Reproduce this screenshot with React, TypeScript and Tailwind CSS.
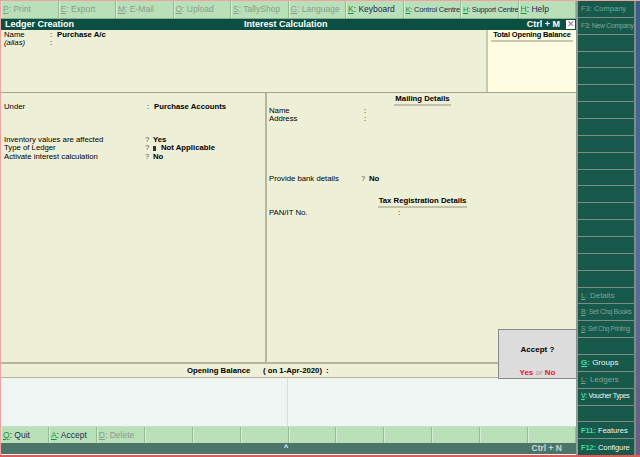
import React from 'react';

type Btn = { k: string; label: string; on?: boolean; size?: string };

const topButtons: Btn[] = [
  { k: 'P', label: 'Print' },
  { k: 'E', label: 'Export' },
  { k: 'M', label: 'E-Mail' },
  { k: 'O', label: 'Upload' },
  { k: 'S', label: 'TallyShop' },
  { k: 'G', label: 'Language' },
  { k: 'K', label: 'Keyboard', on: true },
  { k: 'K', label: 'Control Centre', on: true, size: 'text-[7.5px] tracking-[-0.2px]' },
  { k: 'H', label: 'Support Centre', on: true, size: 'text-[7.5px] tracking-[-0.3px]' },
  { k: 'H', label: 'Help', on: true },
];

const bottomButtons: (Btn | null)[] = [
  { k: 'Q', label: 'Quit', on: true },
  { k: 'A', label: 'Accept', on: true },
  { k: 'D', label: 'Delete' },
  null, null, null, null, null, null, null, null, null,
];

const side: (Btn | null)[] = [
  { k: 'F3', label: 'Company', size: 'text-[7.5px]' },
  { k: 'F3', label: 'New Company', size: 'text-[7px] tracking-[-0.35px]' },
  ...Array(15).fill(null),
  { k: 'L', label: 'Details' },
  { k: 'B', label: 'Set Chq Books', size: 'text-[7px] tracking-[-0.3px]' },
  { k: 'S', label: 'Set Chq Printing', size: 'text-[6.5px] tracking-[-0.35px]' },
  null,
  { k: 'G', label: 'Groups', on: true },
  { k: 'L', label: 'Ledgers' },
  { k: 'V', label: 'Voucher Types', on: true, size: 'text-[7px] tracking-[-0.4px]' },
  null,
  { k: 'F11', label: 'Features', on: true, size: 'text-[7.5px]' },
  { k: 'F12', label: 'Configure', on: true, size: 'text-[7.5px] tracking-[-0.1px]' },
];

function BarButton({ b }: { b: Btn | null }) {
  return (
    <div className="flex-1 flex items-center pl-[2px] border-r border-[#98b898] shadow-[inset_1px_0_0_#d6eed6] whitespace-nowrap overflow-hidden">
      {b && (
        <span className={`${b.size ?? 'text-[8.5px]'} ${b.on ? 'text-[#1d2b57]' : 'text-[#8c9c8c]'}`}>
          <span className={`underline ${b.on ? 'text-[#139346]' : ''}`}>{b.k}</span>: {b.label}
        </span>
      )}
    </div>
  );
}

function SideButton({ b }: { b: Btn | null }) {
  return (
    <div className="flex-1 bg-[#17594b] flex items-center pl-[3px] whitespace-nowrap overflow-hidden">
      {b && (
        <span className={`${b.size ?? 'text-[8px]'} ${b.on ? 'text-[#eef4f1]' : 'text-[#7fa497]'}`}>
          <span className={`${b.k.length === 1 ? 'underline' : ''} ${b.on ? 'text-[#43dba6] font-bold' : ''}`}>{b.k}</span>
          <span className={b.on ? 'text-[#43dba6] font-bold' : ''}>:</span> {b.label}
        </span>
      )}
    </div>
  );
}

export default function App() {
  return (
    <div
      className="w-[640px] h-[457px] flex flex-col bg-[#f2f2f2] overflow-hidden text-black"
      style={{ fontFamily: '"Liberation Sans", Arial, sans-serif' }}
    >
      <div className="h-[1px] bg-[#f0a3a0]" />
      <div className="flex-1 flex min-h-0">
        {/* Main column */}
        <div className="w-[576px] flex flex-col border-l border-[#f0a3a0] relative">
          {/* Top button bar */}
          <div className="h-[18px] flex bg-[#b9e0b8] border-b border-[#8fb08f]">
            {topButtons.map((b, i) => (
              <BarButton key={i} b={b} />
            ))}
          </div>

          {/* Title bar */}
          <div className="h-[11px] bg-[#0c5043] flex items-center text-white font-bold text-[9px] leading-none">
            <span className="w-[240px] pl-[4px]">Ledger Creation</span>
            <span className="flex-1 pl-[3px]">Interest Calculation</span>
            <span className="mr-[6px]">Ctrl + M</span>
            <span className="w-[9px] h-[9px] bg-white text-[#777] text-[9px] font-normal flex items-center justify-center mr-[1px]">
              ✕
            </span>
          </div>

          {/* Top section */}
          <div className="h-[63px] flex bg-[#eeefd7] border-b border-[#a3a48f] text-[7.75px] leading-[8px]">
            <div className="flex-1 pl-[3px] pt-[1px]">
              <div className="flex">
                <span className="w-[46px]">Name</span>
                <span className="w-[7px]">:</span>
                <span className="font-bold">Purchase A/c</span>
              </div>
              <div className="flex">
                <span className="w-[46px] italic">(alias)</span>
                <span>:</span>
              </div>
            </div>
            <div className="w-[90px] bg-[#fffde1] border-l-2 border-[#c9c9b2] flex flex-col items-center pt-[1px]">
              <span className="font-bold border-b-2 border-[#c7c7b0] px-[2px] pb-[1px] whitespace-nowrap text-[7.5px] tracking-[-0.15px]">
                Total Opening Balance
              </span>
            </div>
          </div>

          {/* Lower section */}
          <div className="h-[269px] flex bg-[#eeefd7] text-[7.75px] leading-[8.5px]">
            <div className="w-[266px] border-r-2 border-[#b4b4a0] pl-[3px] pt-[10px]">
              <div className="flex">
                <span className="w-[143px]">Under</span>
                <span className="w-[7px]">:</span>
                <span className="font-bold">Purchase Accounts</span>
              </div>
              <div className="h-[24px]" />
              <div className="flex">
                <span className="w-[141px]">Inventory values are affected</span>
                <span className="w-[8px] text-[#555]">?</span>
                <span className="font-bold">Yes</span>
              </div>
              <div className="flex">
                <span className="w-[141px]">Type of Ledger</span>
                <span className="w-[8px] text-[#555]">?</span>
                <span className="w-[3px] h-[5px] bg-[#333] self-center mr-[5px]" />
                <span className="font-bold">Not Applicable</span>
              </div>
              <div className="flex">
                <span className="w-[141px]">Activate interest calculation</span>
                <span className="w-[8px] text-[#555]">?</span>
                <span className="font-bold">No</span>
              </div>
            </div>

            <div className="flex-1 pt-[2px] pl-[2px]">
              <div className="flex justify-center">
                <span className="font-bold border-b-2 border-[#c2c2ab] px-[1px]">Mailing Details</span>
              </div>
              <div className="pt-[1px]">
                <div className="flex">
                  <span className="w-[95px]">Name</span>
                  <span>:</span>
                </div>
                <div className="flex">
                  <span className="w-[95px]">Address</span>
                  <span>:</span>
                </div>
              </div>
              <div className="h-[51px]" />
              <div className="flex">
                <span className="w-[92px]">Provide bank details</span>
                <span className="w-[8px] text-[#555]">?</span>
                <span className="font-bold">No</span>
              </div>
              <div className="flex justify-center pt-[14px]">
                <span className="font-bold border-b-2 border-[#c2c2ab] px-[1px]">Tax Registration Details</span>
              </div>
              <div className="flex pt-[1px]">
                <span className="w-[129px]">PAN/IT No.</span>
                <span>:</span>
              </div>
            </div>
          </div>

          {/* Opening balance row */}
          <div className="h-[15px] bg-[#eeefd7] border-t-2 border-[#b4b4a0] flex items-center text-[7.75px] font-bold">
            <span className="ml-[186px] w-[76px]">Opening Balance</span>
            <span>( on 1-Apr-2020)</span>
            <span className="ml-[4px]">:</span>
          </div>

          {/* Amount area */}
          <div className="h-[49px] bg-[#eef5f2] border-t border-[#b4b4a0] flex">
            <div className="w-[287px] border-r border-[#d9dedb]" />
            <div className="flex-1" />
          </div>

          {/* Bottom button bar */}
          <div className="h-[17px] flex bg-[#b9e0b8] border-t border-[#c9dcc9]">
            {bottomButtons.map((b, i) => (
              <BarButton key={i} b={b} />
            ))}
          </div>

          {/* Status bar */}
          <div className="h-[11px] bg-[#4d7469] flex items-center text-[#c9d6d1] text-[8.5px] font-bold">
            <span className="ml-[283px] text-white text-[7px]">^</span>
            <span className="ml-auto mr-[14px]">Ctrl + N</span>
          </div>

          {/* Accept dialog */}
          <div className="absolute left-[497px] top-[328px] w-[79px] h-[50px] bg-[#dcdcdc] border border-[#8a8a8a] flex flex-col items-center text-[8px] leading-[8px] font-bold">
            <span className="mt-[16px]">Accept ?</span>
            <span className="mt-[15px]">
              <span className="text-[#e0202a]">Yes</span>
              <span className="text-[#9a9a9a] font-normal"> or </span>
              <span className="text-[#e0202a]">No</span>
            </span>
          </div>
        </div>

        {/* Right sidebar */}
        <div className="w-[60px] bg-[#7d8d86] border-l-2 border-[#8e9c96] flex flex-col gap-px pr-[2px]">
          {side.map((b, i) => (
            <SideButton key={i} b={b} />
          ))}
        </div>
        <div className="w-[4px] bg-gradient-to-b from-[#3a5d8c] via-[#4f6f9f] to-[#6a5f80]" />
      </div>
      <div className="h-[2px] bg-[#e05a58]" />
    </div>
  );
}
